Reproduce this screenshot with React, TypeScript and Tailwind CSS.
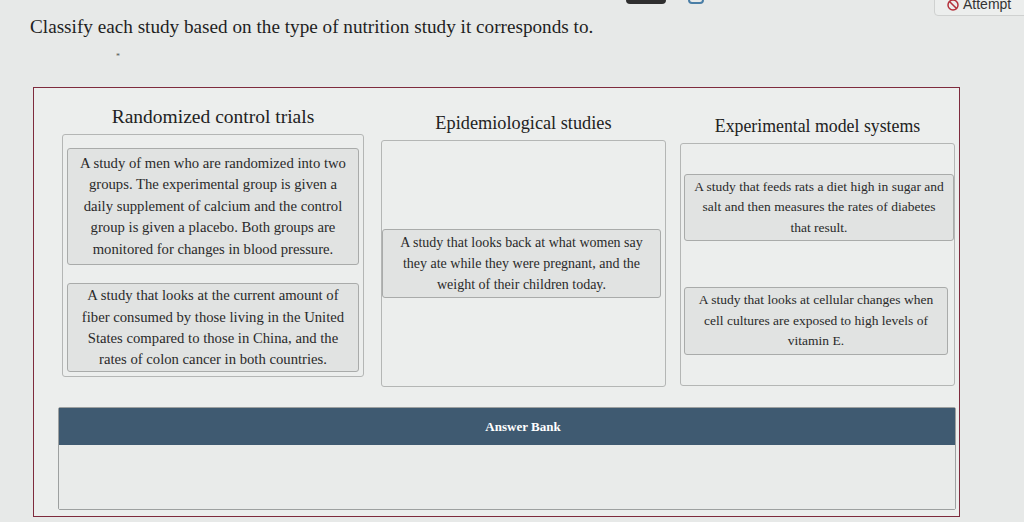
import { Ban } from 'lucide-react'

const serif = { fontFamily: '"Liberation Serif", "Times New Roman", serif' }

function Card({ text, className }: { text: string; className: string }) {
    return (
        <div className={`rounded-[3px] border border-[#a9abaa] bg-[#e1e3e2] text-center text-[#2a2a2a] ${className}`}>
            {text}
        </div>
    )
}

export default function App() {
    return (
        <div className="relative h-[522px] w-[1024px] overflow-hidden bg-[#e7e9e8]" style={serif}>
            {/* top bits */}
            <div className="absolute left-[626px] top-0 h-[4px] w-[40px] rounded-b-sm bg-[#2f2f2f]" />
            <div className="absolute left-[688px] top-[-4px] h-[8px] w-[16px] rounded-sm border-2 border-[#4a7ea6]" />
            <div className="absolute right-[-6px] top-[-6px] flex h-[22px] w-[96px] items-center gap-1 rounded border border-[#cfd1d0] bg-[#eceeed] pl-3 text-[14px] text-[#333]" style={{ fontFamily: '"Liberation Sans", Arial, sans-serif' }}>
                <Ban className="h-[12px] w-[12px] text-[#b4323c]" strokeWidth={3} />
                <span className="mt-[-2px]">Attempt</span>
            </div>

            <div className="px-[30px] pt-[13px] text-[19.2px] text-[#1f1f1f]">
                Classify each study based on the type of nutrition study it corresponds to.
            </div>
            <div className="ml-[116px] mt-[11px] h-[4px] text-[8px] leading-none text-[#555]">*</div>

            <div className="ml-[33px] mt-[30px] h-[430px] w-[927px] border-[1.5px] border-[#7e2b3d] bg-[#eceeed] pl-[28px] pr-[4px] pt-[18px]">
                <div className="flex">
                    <div className="w-[303px]">
                        <div className="text-center text-[19.5px] leading-[22px] text-[#222]">Randomized control trials</div>
                        <div className="mt-[6px] h-[243px] rounded-[3px] border border-[#b4b6b5] px-[4px] pt-[13px] text-[14.7px] leading-[21.5px]">
                            <Card className="px-[5px] py-[4px]" text="A study of men who are randomized into two groups. The experimental group is given a daily supplement of calcium and the control group is given a placebo. Both groups are monitored for changes in blood pressure." />
                            <Card className="mt-[18px] px-[5px] py-[1px] leading-[21.3px]" text="A study that looks at the current amount of fiber consumed by those living in the United States compared to those in China, and the rates of colon cancer in both countries." />
                        </div>
                    </div>
                    <div className="ml-[17px] mt-[6px] w-[286px]">
                        <div className="text-center text-[18.3px] leading-[22px] text-[#222]">Epidemiological studies</div>
                        <div className="mt-[6px] h-[247px] rounded-[3px] border border-[#b4b6b5] pr-[4px] pt-[88px] text-[14px] leading-[21px]">
                            <Card className="px-2 py-[2px]" text="A study that looks back at what women say they ate while they were pregnant, and the weight of their children today." />
                        </div>
                    </div>
                    <div className="ml-[14px] mt-[9px] w-[276px]">
                        <div className="text-center text-[17.8px] leading-[22px] text-[#222]">Experimental model systems</div>
                        <div className="mt-[6px] h-[243px] rounded-[3px] border border-[#b4b6b5] pl-[3px] pt-[30px] text-[13.5px] leading-[20.5px]">
                            <Card className="px-2 py-[2px]" text="A study that feeds rats a diet high in sugar and salt and then measures the rates of diabetes that result." />
                            <Card className="mr-[6px] mt-[46px] px-2 py-[2px]" text="A study that looks at cellular changes when cell cultures are exposed to high levels of vitamin E." />
                        </div>
                    </div>
                </div>

                <div className="ml-[-4px] mt-[20px] w-[898px] rounded-[2px] border border-[#9da0a0]">
                    <div className="flex h-[37px] items-center justify-center bg-[#3f5a71] pl-[32px] text-[13px] font-bold text-white">
                        Answer Bank
                    </div>
                    <div className="h-[64px] bg-[#e9ebea]" />
                </div>
            </div>
        </div>
    )
}
